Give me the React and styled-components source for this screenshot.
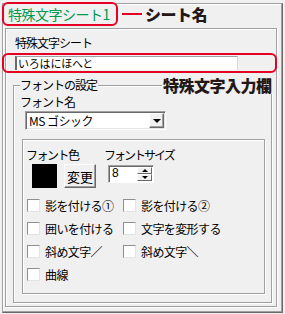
import React from "react";
import styled, { createGlobalStyle } from "styled-components";

const GlobalStyle = createGlobalStyle`
  html, body {
    margin: 0;
    padding: 0;
    background: #f0f0f0;
  }
  body {
    font-family: "Noto Sans CJK JP", "Liberation Sans", sans-serif;
    font-size: 12px;
    color: #000;
  }
`;

const JP = `"Noto Sans CJK JP", "Liberation Sans", sans-serif`;

const Page = styled.div`
  position: relative;
  width: 285px;
  height: 314px;
  padding-top: 3px;
  box-sizing: border-box;
  background: #f0f0f0;
`;

const Frame = styled.div`
  margin-left: 2px;
  width: 281px;
  height: 310px;
  box-sizing: border-box;
  border: 1px solid #a0a0a0;
  border-right-color: #696969;
  border-bottom-color: #696969;
  box-shadow: inset -1px -1px 0 #a0a0a0, inset 1px 1px 0 #fff;
  display: flex;
  flex-direction: column;
`;

const Header = styled.div`
  display: flex;
  align-items: center;
  height: 24px;
  margin-top: -2px;
`;

const TabLabel = styled.div`
  margin-left: -1px;
  width: 116px;
  height: 24px;
  box-sizing: border-box;
  border: 2px solid #e60023;
  border-radius: 6px;
  background: #f0f0f0;
  padding-left: 4px;
  font-family: ${JP};
  font-size: 14px;
  line-height: 20px;
  color: #00994d;
  letter-spacing: -0.5px;
`;

const Connector = styled.div`
  margin-left: 4px;
  width: 20px;
  height: 2px;
  background: #e60023;
`;

const Note = styled.div`
  margin-left: ${(p) => p.gap || 0}px;
  font-family: ${JP};
  font-size: 16px;
  font-weight: 900;
  line-height: 18px;
  color: #231815;
  letter-spacing: -0.5px;
`;

const FloatingNote = styled(Note)`
  position: absolute;
  left: 162px;
  top: 76px;
  padding: 0 1px;
  background: #f0f0f0;
`;

const Panel = styled.div`
  margin: 2px 0 0 2px;
  width: 272px;
  height: 279px;
  box-sizing: border-box;
  border: 1px solid #a0a0a0;
  box-shadow: inset 1px 1px 0 #fff, 1px 1px 0 #fff;
  display: flex;
  flex-direction: column;
`;

const Label = styled.div`
  margin: ${(p) => p.m || "0"};
  font-family: ${JP};
  font-size: 12px;
  line-height: 14px;
  letter-spacing: ${(p) => p.ls || "-0.5px"};
  white-space: nowrap;
`;

const InputRing = styled.div`
  margin: 3px 0 0 -4px;
  width: 275px;
  height: 20px;
  box-sizing: border-box;
  border: 2px solid #e60023;
  border-radius: 6px;
  display: flex;
`;

const TextInput = styled.div`
  margin: 1px 0 0 11px;
  width: 223px;
  height: 14px;
  box-sizing: border-box;
  background: #fff;
  border-left: 2px solid #696969;
  border-top: 1px solid #a0a0a0;
  border-right: 1px solid #d8d8d8;
  padding-left: 1px;
  font-family: ${JP};
  font-size: 11px;
  line-height: 12px;
  letter-spacing: -0.2px;
`;

const GroupBox = styled.div`
  margin: ${(p) => p.m || "0"};
  width: ${(p) => p.w}px;
  height: ${(p) => p.h}px;
  box-sizing: border-box;
  border: 1px solid #a0a0a0;
  box-shadow: inset 1px 1px 0 #fff, 1px 1px 0 #fff;
  display: flex;
  flex-direction: column;
  align-items: flex-start;
`;

const Legend = styled.div`
  margin: -8px 0 0 6px;
  padding: 0 1px 0 0;
  background: #f0f0f0;
  font-family: ${JP};
  font-size: 12px;
  line-height: 14px;
  letter-spacing: -1px;
`;

const Combo = styled.div`
  margin: 2px 0 0 11px;
  width: 141px;
  height: 19px;
  box-sizing: border-box;
  background: #fff;
  border: 1px solid;
  border-color: #a0a0a0 #fff #fff #a0a0a0;
  box-shadow: inset 1px 1px 0 #696969, inset -1px -1px 0 #e3e3e3;
  display: flex;
  align-items: center;
  justify-content: space-between;
  padding: 0 1px 0 3px;
  font-family: ${JP};
  font-size: 12px;
  letter-spacing: -0.5px;
`;

const ArrowButton = styled.div`
  width: 15px;
  height: 15px;
  box-sizing: border-box;
  background: #f0f0f0;
  border: 1px solid;
  border-color: #fff #696969 #696969 #fff;
  box-shadow: inset -1px -1px 0 #a0a0a0;
  display: flex;
  align-items: center;
  justify-content: center;
`;

const Triangle = styled.div`
  width: 0;
  height: 0;
  border-left: ${(p) => p.s || 4}px solid transparent;
  border-right: ${(p) => p.s || 4}px solid transparent;
  ${(p) =>
    p.up
      ? `border-bottom: ${(p.s || 4)}px solid #000;`
      : `border-top: ${(p.s || 4)}px solid #000;`}
`;

const FieldRow = styled.div`
  display: flex;
  margin: 8px 0 0 3px;
`;

const Field = styled.div`
  display: flex;
  flex-direction: column;
  margin-left: ${(p) => p.gap || 0}px;
`;

const ControlRow = styled.div`
  display: flex;
  align-items: flex-start;
  margin-top: 2px;
`;

const Swatch = styled.div`
  margin-left: 6px;
  width: 25px;
  height: 24px;
  background: #000;
`;

const PushButton = styled.div`
  margin-left: 7px;
  width: 32px;
  height: 24px;
  box-sizing: border-box;
  background: #f0f0f0;
  border: 1px solid;
  border-color: #fff #696969 #696969 #fff;
  box-shadow: inset -1px -1px 0 #a0a0a0;
  display: flex;
  align-items: center;
  justify-content: center;
  font-family: ${JP};
  font-size: 13px;
`;

const Spin = styled.div`
  margin: 3px 0 0 4px;
  width: 46px;
  height: 18px;
  box-sizing: border-box;
  background: #fff;
  border: 1px solid;
  border-color: #a0a0a0 #fff #fff #a0a0a0;
  box-shadow: inset 1px 1px 0 #696969;
  display: flex;
  justify-content: space-between;
  padding: 1px 1px 1px 3px;
  font-family: "Liberation Sans", sans-serif;
  font-size: 12px;
  line-height: 13px;
`;

const SpinButtons = styled.div`
  display: flex;
  flex-direction: column;
  width: 15px;
`;

const SpinButton = styled.div`
  height: 7px;
  box-sizing: border-box;
  background: #f0f0f0;
  border: 1px solid;
  border-color: #fff #696969 #696969 #fff;
  display: flex;
  align-items: center;
  justify-content: center;
`;

const Checks = styled.div`
  display: grid;
  grid-template-columns: 96px 120px;
  grid-auto-rows: 23px;
  margin: 6px 0 0 4px;
`;

const CheckItem = styled.div`
  display: flex;
  align-items: center;
  font-family: ${JP};
  font-size: 12px;
  letter-spacing: -0.6px;
  white-space: nowrap;
`;

const Box = styled.div`
  width: 13px;
  height: 13px;
  box-sizing: border-box;
  margin-right: 5px;
  background: #fff;
  border: 1px solid;
  border-color: #8e8f8f #e3e3e3 #e3e3e3 #8e8f8f;
  flex-shrink: 0;
`;

const checks = [
  "影を付ける①",
  "影を付ける②",
  "囲いを付ける",
  "文字を変形する",
  "斜め文字／",
  "斜め文字＼",
  "曲線",
];

export default function App() {
  return (
    <Page>
      <GlobalStyle />
      <Frame>
        <Header>
          <TabLabel>特殊文字シート1</TabLabel>
          <Connector />
          <Note gap={3}>シート名</Note>
        </Header>
        <Panel>
          <Label m="7px 0 0 9px" ls="-1px">特殊文字シート</Label>
          <InputRing>
            <TextInput>いろはにほへと</TextInput>
          </InputRing>
          <GroupBox m="12px 0 0 7px" w={259} h={218}>
            <Legend>フォントの設定</Legend>
            <Label m="3px 0 0 6px" ls="-1px">フォント名</Label>
            <Combo>
              <span>MS ゴシック</span>
              <ArrowButton>
                <Triangle s={4} />
              </ArrowButton>
            </Combo>
            <GroupBox m="9px 0 0 8px" w={243} h={155}>
              <FieldRow>
                <Field>
                  <Label ls="-1.5px">フォント色</Label>
                  <ControlRow>
                    <Swatch />
                    <PushButton>変更</PushButton>
                  </ControlRow>
                </Field>
                <Field gap={8}>
                  <Label ls="-2px">フォントサイズ</Label>
                  <Spin>
                    <span>8</span>
                    <SpinButtons>
                      <SpinButton>
                        <Triangle up s={3} />
                      </SpinButton>
                      <SpinButton>
                        <Triangle s={3} />
                      </SpinButton>
                    </SpinButtons>
                  </Spin>
                </Field>
              </FieldRow>
              <Checks>
                {checks.map((c) => (
                  <CheckItem key={c}>
                    <Box />
                    {c}
                  </CheckItem>
                ))}
              </Checks>
            </GroupBox>
          </GroupBox>
        </Panel>
      </Frame>
      <FloatingNote>特殊文字入力欄</FloatingNote>
    </Page>
  );
}
